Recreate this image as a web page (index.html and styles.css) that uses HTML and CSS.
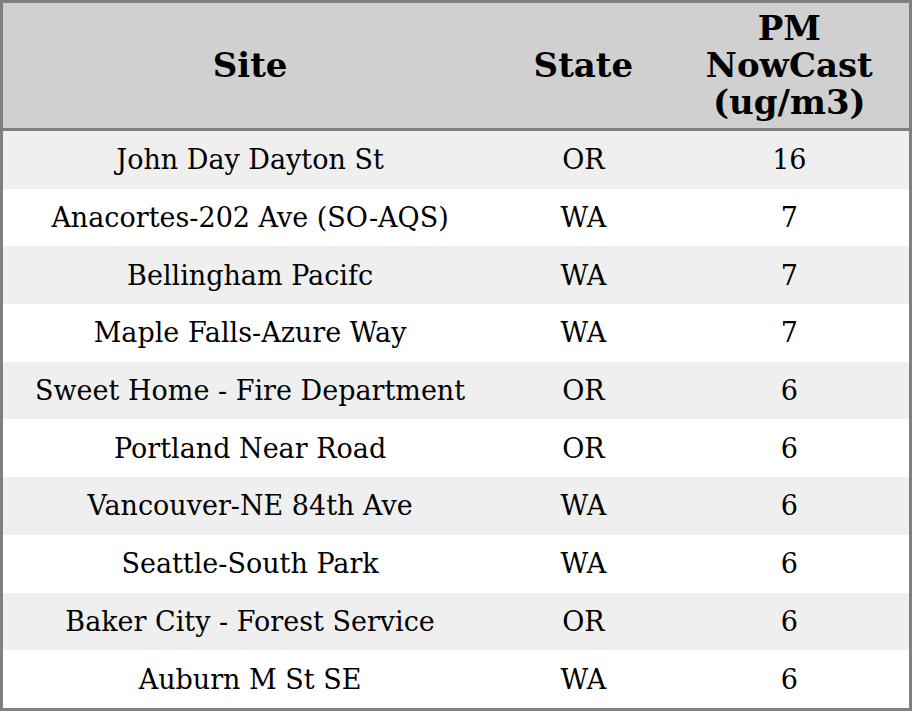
FILE: index.html
```html
<!DOCTYPE html>
<html>
<head>
<meta charset="utf-8">
<link rel="stylesheet" href="styles.css">
</head>
<body>
<table class="aq">
  <colgroup>
    <col class="c-site">
    <col class="c-state">
    <col class="c-pm">
  </colgroup>
  <thead>
    <tr class="head">
      <th>Site</th>
      <th>State</th>
      <th>PM<br>NowCast<br>(ug/m3)</th>
    </tr>
  </thead>
  <tbody>
    <tr><td>John Day Dayton St</td><td>OR</td><td>16</td></tr>
    <tr><td>Anacortes-202 Ave (SO-AQS)</td><td>WA</td><td>7</td></tr>
    <tr><td>Bellingham Pacifc</td><td>WA</td><td>7</td></tr>
    <tr><td>Maple Falls-Azure Way</td><td>WA</td><td>7</td></tr>
    <tr><td>Sweet Home - Fire Department</td><td>OR</td><td>6</td></tr>
    <tr><td>Portland Near Road</td><td>OR</td><td>6</td></tr>
    <tr><td>Vancouver-NE 84th Ave</td><td>WA</td><td>6</td></tr>
    <tr><td>Seattle-South Park</td><td>WA</td><td>6</td></tr>
    <tr><td>Baker City - Forest Service</td><td>OR</td><td>6</td></tr>
    <tr><td>Auburn M St SE</td><td>WA</td><td>6</td></tr>
  </tbody>
</table>
</body>
</html>
```
FILE: styles.css
```css
html, body {
  margin: 0;
  padding: 0;
  background: #ffffff;
}
.aq {
  width: 912px;
  border-collapse: collapse;
  border: 3px solid #808080;
  font-family: "DejaVu Serif", serif;
  color: #000;
  table-layout: fixed;
}
.c-site { width: 494px; }
.c-state { width: 172px; }
.c-pm { width: 240px; }
.head th {
  background: #d0d0d0;
  font-size: 34px;
  font-weight: bold;
  line-height: 37px;
  height: 125px;
  padding: 0;
  text-align: center;
  vertical-align: middle;
  border-bottom: 3px solid #808080;
}
.aq td {
  font-size: 27px;
  height: 57.7px;
  padding: 0;
  text-align: center;
  vertical-align: middle;
}
.aq tbody tr:nth-child(odd) td {
  background: #efefef;
}
```
